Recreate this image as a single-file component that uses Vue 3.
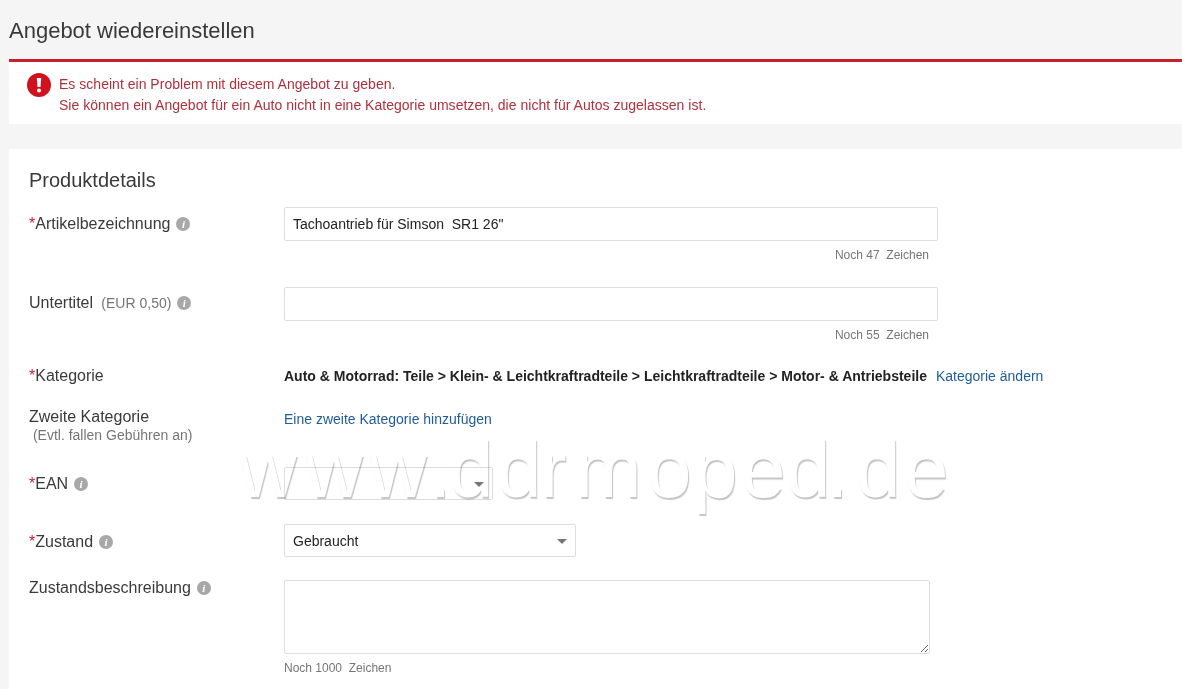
<script setup>
const watermark = [
  ['w', 8.2], ['w', 6.2], ['w', 2.2], ['.', -2.2], ['d', 3.5], ['d', -1.5], ['r', 8.4],
  ['m', 5.4], ['o', 1.5], ['p', 3.5], ['e', 0.5], ['d', -4.5], ['.', 7.8], ['d', 3.5], ['e', 0],
]
</script>

<template>
  <div class="page">
    <header class="head"><h1>Angebot wiedereinstellen</h1></header>
    <section class="alert">
      <svg class="alert-icon" width="24" height="24" viewBox="0 0 24 24">
        <circle cx="12" cy="12" r="12" fill="#d0121f" />
        <path d="M9.8 5h4.4l-.7 9h-3z" fill="#fff" />
        <circle cx="12" cy="17.5" r="2" fill="#fff" />
      </svg>
      <div class="alert-text">
        <div>Es scheint ein Problem mit diesem Angebot zu geben.</div>
        <div>Sie können ein Angebot für ein Auto nicht in eine Kategorie umsetzen, die nicht für Autos zugelassen ist.</div>
      </div>
    </section>

    <main class="card">
      <h2>Produktdetails</h2>

      <div class="row row-title">
        <div class="label"><span class="req">*</span>Artikelbezeichnung<i class="info">i</i></div>
        <div class="field wide">
          <input class="box" type="text" value="Tachoantrieb für Simson  SR1 26&quot;" />
          <div class="hint right">Noch 47&nbsp; Zeichen</div>
        </div>
      </div>

      <div class="row row-sub">
        <div class="label">Untertitel <span class="muted">&nbsp;(EUR 0,50)</span><i class="info">i</i></div>
        <div class="field wide">
          <input class="box" type="text" />
          <div class="hint right">Noch 55&nbsp; Zeichen</div>
        </div>
      </div>

      <div class="row row-cat">
        <div class="label"><span class="req">*</span>Kategorie</div>
        <div class="cat">
          <b>Auto &amp; Motorrad: Teile &gt; Klein- &amp; Leichtkraftradteile &gt; Leichtkraftradteile &gt; Motor- &amp; Antriebsteile</b>
          <a href="#">Kategorie ändern</a>
        </div>
      </div>

      <div class="row row-second">
        <div class="label">
          Zweite Kategorie
          <div class="muted small">&nbsp;(Evtl. fallen Gebühren an)</div>
        </div>
        <a class="add" href="#">Eine zweite Kategorie hinzufügen</a>
      </div>

      <div class="row row-ean">
        <div class="label"><span class="req">*</span>EAN<i class="info">i</i></div>
        <div class="select ean"><span class="caret"></span></div>
      </div>

      <div class="row row-state">
        <div class="label"><span class="req">*</span>Zustand<i class="info">i</i></div>
        <div class="select state">Gebraucht<span class="caret"></span></div>
      </div>

      <div class="row row-desc">
        <div class="label">Zustandsbeschreibung<i class="info">i</i></div>
        <div class="field">
          <textarea class="area"></textarea>
          <div class="hint">Noch 1000&nbsp; Zeichen</div>
        </div>
      </div>
    </main>

    <div class="watermark"><span v-for="(item, i) in watermark" :key="i" :style="{ letterSpacing: item[1] + 'px' }">{{ item[0] }}</span></div>
  </div>
</template>

<style scoped>
.page {
  position: relative;
  height: 689px;
  overflow: hidden;
  background: #f5f5f5;
  font-family: "Liberation Sans", Arial, sans-serif;
  color: #3a3a3a;
}
.head {
  height: 59px;
  padding-left: 9px;
  box-sizing: border-box;
}
h1 {
  margin: 0;
  padding-top: 19px;
  font-size: 22px;
  line-height: 24px;
  font-weight: 400;
  color: #3a3a3a;
}
.alert {
  margin-left: 9px;
  padding: 11px 0 0 18px;
  height: 65px;
  box-sizing: border-box;
  border-top: 3px solid #c9202e;
  background: #fff;
  display: flex;
  gap: 8px;
}
.alert-icon { flex: none; }
.alert-text {
  margin-top: 1px;
  font-size: 14px;
  line-height: 21px;
  letter-spacing: .02px;
  color: #b0303c;
}
.card {
  margin: 25px 0 0 9px;
  background: #fff;
  padding: 19px 0 0 20px;
  height: 540px;
  box-sizing: border-box;
}
h2 {
  margin: 0;
  font-size: 20px;
  line-height: 24px;
  font-weight: 400;
  color: #3a3a3a;
}
.row { display: flex; }
.label {
  flex: none;
  width: 255px;
  font-size: 16px;
  line-height: 20px;
  color: #3a3a3a;
}
.req { color: #c9202e; }
.muted { color: #767676; font-size: 14px; }
.small { line-height: 17px; }
.info {
  display: inline-block;
  width: 14px;
  height: 14px;
  margin-left: 6px;
  border-radius: 50%;
  background: #a8a8a8;
  color: #fff;
  font: italic 700 11px/14px "Liberation Serif", serif;
  text-align: center;
  vertical-align: 1px;
}
.field { width: 654px; }
.box {
  display: block;
  width: 654px;
  height: 34px;
  box-sizing: border-box;
  border: 1px solid #ddd;
  border-radius: 2px;
  padding: 0 8px;
  font: 14px "Liberation Sans", Arial, sans-serif;
  color: #222;
  background: #fff;
  outline: none;
}
.hint {
  font-size: 12px;
  line-height: 14px;
  color: #767676;
  margin-top: 7px;
}
.right { text-align: right; padding-right: 9px; }
.row-title { margin-top: 15px; }
.row-title .label { padding-top: 7px; }
.row-sub { margin-top: 25px; }
.row-sub .label { padding-top: 6px; }
.row-cat { margin-top: 24px; }
.cat { font-size: 14px; line-height: 20px; color: #222; white-space: nowrap; }
.cat a { margin-left: 9px; }
a { color: #1f5c99; text-decoration: none; font-size: 14px; line-height: 20px; }
.row-second { margin-top: 23px; height: 58px; }
.row-second .label { margin-top: -2px; }
.select {
  position: relative;
  box-sizing: border-box;
  height: 33px;
  border: 1px solid #ddd;
  border-radius: 2px;
  padding: 0 8px;
  font-size: 14px;
  line-height: 32px;
  color: #222;
  background: #fff;
}
.ean { width: 209px; }
.state { width: 292px; }
.caret {
  position: absolute;
  right: 8px;
  top: 14px;
  border-left: 5px solid transparent;
  border-right: 5px solid transparent;
  border-top: 5px solid #767676;
}
.row-ean .label { padding-top: 7px; }
.row-state { margin-top: 24px; }
.row-state .label { padding-top: 8px; }
.row-desc { margin-top: 23px; }
.row-desc .label { margin-top: -2px; }
.area {
  display: block;
  width: 646px;
  height: 74px;
  box-sizing: border-box;
  border: 1px solid #ddd;
  border-radius: 2px;
  background: #fff;
  outline: none;
  resize: both;
}
.watermark {
  position: absolute;
  left: 239px;
  top: 445px;
  font-size: 80px;
  line-height: 50px;
  font-kerning: none;
  color: #fff;
  white-space: nowrap;
  text-shadow: 1px 2px 1px #c4c4c4;
  mix-blend-mode: multiply;
  pointer-events: none;
}
</style>

<style>
html, body { margin: 0; background: #f5f5f5; overflow: hidden; }
</style>
